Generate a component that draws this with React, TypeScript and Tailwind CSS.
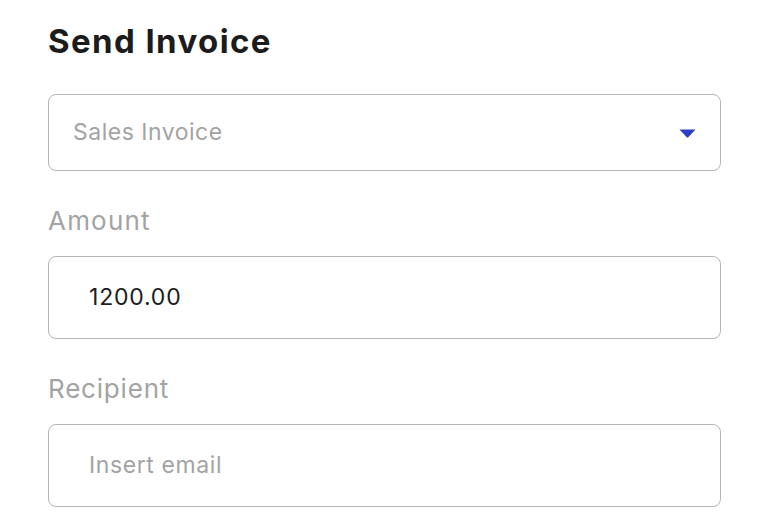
import React from "react";

export default function App() {
  return (
    <div className="w-[769px] h-[528px] bg-white overflow-hidden" style={{ fontFamily: "Inter, 'Noto Sans', sans-serif" }}>
      <div className="pl-[48px] pr-[48px] pt-[20px] flex flex-col">
        <h1 className="text-[33px] leading-[42px] font-bold text-[#1c1c1c] tracking-[1.4px]">Send Invoice</h1>
        <div className="mt-[32px] h-[77px] w-[673px] border border-[#b5b5b5] rounded-[8px] flex items-center justify-between pl-[24px] pr-[24px]">
          <span className="text-[23px] text-[#a3a3a3] tracking-[0.5px]">Sales Invoice</span>
          <svg width="17" height="9" viewBox="0 0 17 9" className="mt-[2px]">
            <path d="M0.5 0.5 H16.5 L9.5 8 Q8.5 9 7.5 8 Z" fill="#2b3fc6" />
          </svg>
        </div>
        <label className="mt-[30px] text-[26px] leading-[40px] text-[#a3a3a3] tracking-[1.2px]">Amount</label>
        <div className="mt-[15px] h-[83px] w-[673px] border border-[#b5b5b5] rounded-[8px] flex items-center pl-[40px]">
          <span className="text-[23px] text-[#1c1c1c] tracking-[0.8px]">1200.00</span>
        </div>
        <label className="mt-[30px] text-[26px] leading-[40px] text-[#a3a3a3] tracking-[0.8px]">Recipient</label>
        <div className="mt-[15px] h-[83px] w-[673px] border border-[#b5b5b5] rounded-[8px] flex items-center pl-[40px]">
          <span className="text-[23px] text-[#a3a3a3] tracking-[0.6px]">Insert email</span>
        </div>
      </div>
    </div>
  );
}
